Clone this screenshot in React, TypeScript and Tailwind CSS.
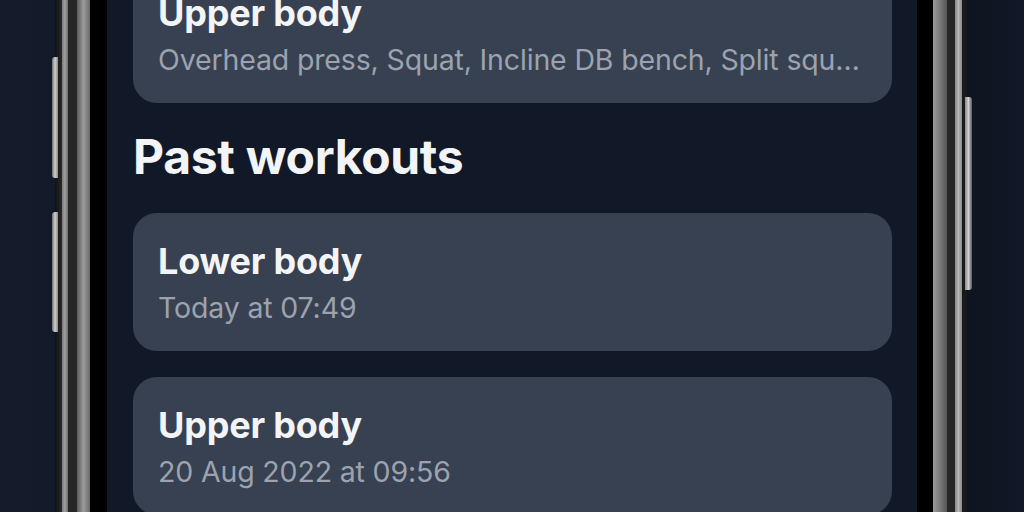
import React from "react";

interface Workout {
  title: string;
  detail: string;
}

const past: Workout[] = [
  { title: "Lower body", detail: "Today at 07:49" },
  { title: "Upper body", detail: "20 Aug 2022 at 09:56" },
];

function WorkoutCard({ title, detail }: Workout) {
  return (
    <div className="min-w-0 rounded-[24px] bg-[#374151] px-[25px] pt-[27px] pb-[25px]">
      <h3 className="text-[36px] leading-[42px] font-bold text-[#f3f4f6] tracking-[-0.2px]">{title}</h3>
      <p className="mt-2 text-[28.5px] leading-[36px] text-[#9ca3af] tracking-[-0.15px] truncate">{detail}</p>
    </div>
  );
}

export default function App() {
  return (
    <div
      className="relative flex h-[512px] w-[1024px] overflow-hidden bg-[#111827]"
      style={{ fontFamily: "Inter, 'Noto Sans', sans-serif" }}
    >
      {/* outer left */}
      <div className="w-[55px] shrink-0 bg-gradient-to-r from-[#151c2c] to-[#121929]" />
      {/* left frame */}
      <div className="w-[7px] shrink-0 bg-gradient-to-r from-[#111111] to-[#2a2a2a]" />
      <div className="w-[6px] shrink-0 bg-gradient-to-r from-[#7a7a7a] via-[#a0a0a0] to-[#6a6a6a]" />
      <div className="w-[9px] shrink-0 bg-[#262626]" />
      <div className="w-[13px] shrink-0 bg-gradient-to-r from-[#5c5c5c] via-[#9b9b9b] to-[#6a6a6a]" />
      <div className="w-[17px] shrink-0 bg-black" />

      {/* screen */}
      <div className="w-[810px] shrink-0 bg-[#111827] pl-[26px] pr-[25px]">
        <div className="-mt-[35px]">
          <WorkoutCard title="Upper body" detail="Overhead press, Squat, Incline DB bench, Split squats, Pull-ups" />
        </div>
        <h2 className="mt-[26px] mb-[28px] text-[48px] leading-[56px] font-bold text-[#f3f4f6] tracking-[-0.3px]">
          Past workouts
        </h2>
        <div className="flex flex-col gap-[26px]">
          {past.map((w) => (
            <WorkoutCard key={w.detail} {...w} />
          ))}
        </div>
      </div>

      {/* right frame */}
      <div className="w-[16px] shrink-0 bg-black" />
      <div className="w-[14px] shrink-0 bg-gradient-to-r from-[#9b9b9b] via-[#7a7a7a] to-[#555555]" />
      <div className="w-[8px] shrink-0 bg-[#262626]" />
      <div className="w-[7px] shrink-0 bg-gradient-to-r from-[#8a8a8a] via-[#b5b5b5] to-[#8a8a8a]" />
      <div className="w-[5px] shrink-0 bg-[#1a1a1a]" />
      {/* outer right */}
      <div className="flex-1 bg-gradient-to-r from-[#0f1420] to-[#111827]" />

      {/* side buttons */}
      <div className="absolute left-[52px] top-[57px] h-[121px] w-[6px] rounded-l-[3px] bg-gradient-to-r from-[#6e6e6e] via-[#d0d0d0] to-[#8a8a8a]" />
      <div className="absolute left-[52px] top-[212px] h-[120px] w-[6px] rounded-l-[3px] bg-gradient-to-r from-[#6e6e6e] via-[#d0d0d0] to-[#8a8a8a]" />
      <div className="absolute left-[965px] top-[97px] h-[193px] w-[7px] rounded-r-[3px] bg-gradient-to-r from-[#8a8a8a] via-[#d0d0d0] to-[#5a5a5a]" />
    </div>
  );
}
